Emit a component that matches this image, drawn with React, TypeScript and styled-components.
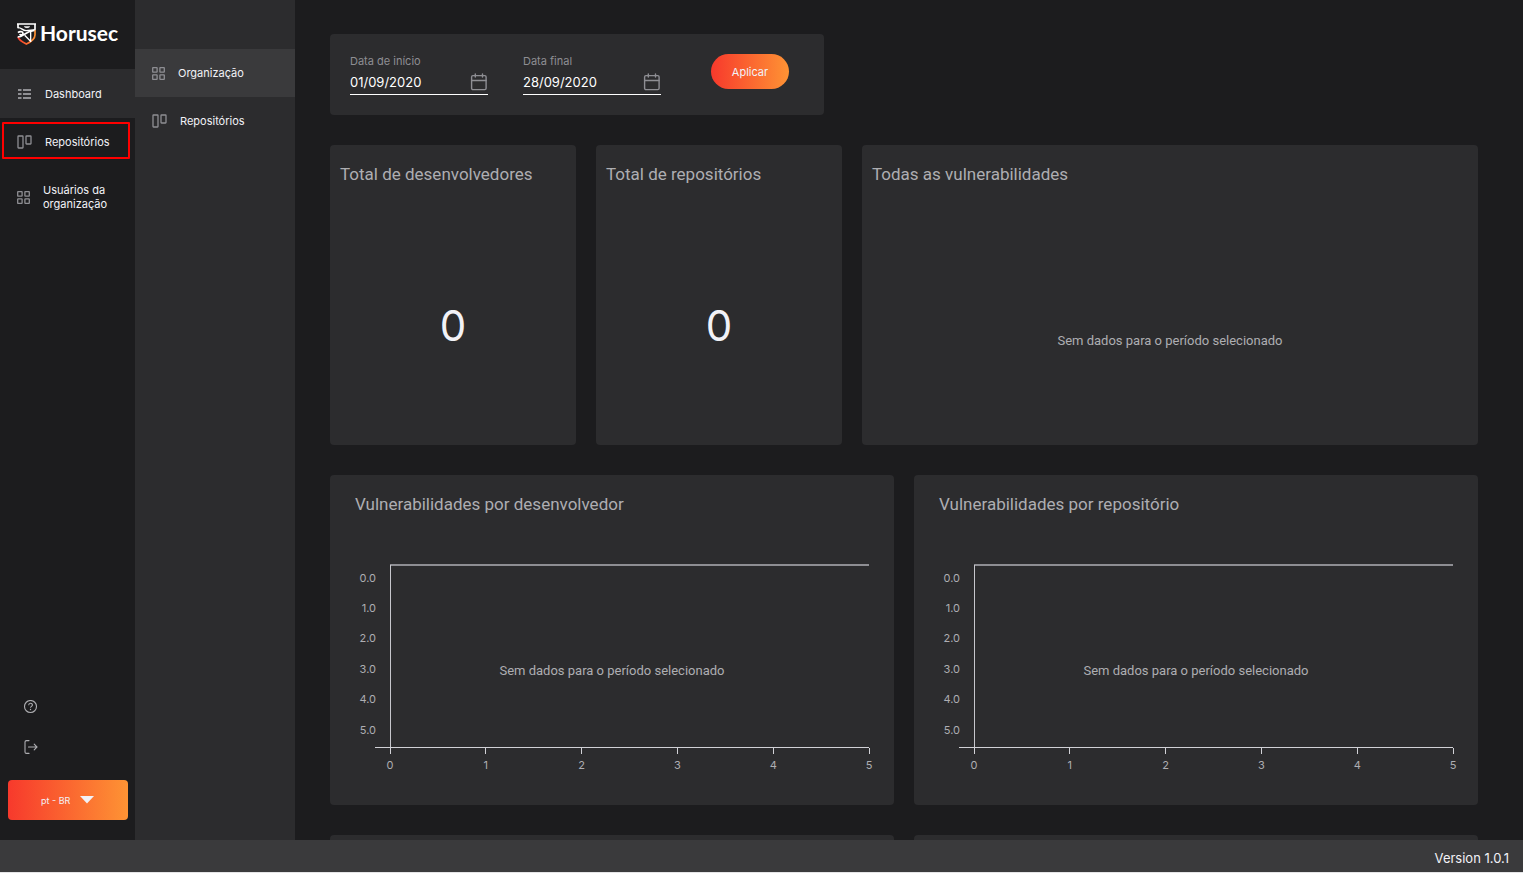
import React from 'react';
import styled, { createGlobalStyle } from 'styled-components';

const GlobalStyle = createGlobalStyle`
  *, *::before, *::after { box-sizing: border-box; }
  body {
    margin: 0;
    background: #1c1c1e;
    color: #f2f2f7;
    font-family: Inter, "Liberation Sans", sans-serif;
    font-size: 11px;
  }
  h1, h2, p, ul { margin: 0; padding: 0; font-weight: 400; }
  ul { list-style: none; }
  button, input, select { font-family: inherit; }
`;

const Shell = styled.div`
  display: flex;
  flex-direction: column;
  height: 100vh;
  overflow: hidden;
  border-bottom: 1px solid #e5e5e7;
`;

const Body = styled.div`
  display: flex;
  flex: 1;
  min-height: 0;
`;

const Sidebar = styled.aside`
  display: flex;
  flex-direction: column;
  justify-content: space-between;
  flex: 0 0 135px;
  background: #1c1c1e;
`;

const Brand = styled.a`
  display: flex;
  align-items: center;
  gap: 4px;
  height: 69px;
  padding: 0 0 4px 17px;
  color: #fff;
  font-family: Lato, sans-serif;
  font-size: 21px;
  font-weight: 700;
  text-decoration: none;

  svg { margin-top: 2px; }
`;

const SubMenu = styled.nav`
  flex: 0 0 160px;
  padding-top: 49px;
  background: #2c2c2e;
`;

const NavItem = styled.li`
  position: relative;
`;

const NavLink = styled.a<{ $active?: boolean; $height?: number; $tone?: string }>`
  display: flex;
  align-items: center;
  gap: 13px;
  height: ${(p) => p.$height || 48}px;
  padding: 0 16px 0 17px;
  background: ${(p) => (p.$active ? p.$tone || '#2c2c2e' : 'transparent')};
  color: #f2f2f7;
  font-size: 11px;
  line-height: 14px;
  text-decoration: none;

  svg { flex: none; }
`;

const Highlight = styled.span`
  position: absolute;
  inset: 4px 5px 7px 2px;
  border: 2px solid #ff0000;
  border-radius: 1px;
  pointer-events: none;
`;

const SidebarFooter = styled.div`
  display: flex;
  flex-direction: column;
  padding: 0 7px 20px 8px;
`;

const IconButton = styled.button`
  display: flex;
  align-items: center;
  width: 40px;
  height: 40px;
  padding: 0 0 0 15px;
  border: 0;
  background: none;
  color: #aeaeb2;
`;

const LanguageBox = styled.label`
  position: relative;
  display: block;
  height: 40px;
  margin-top: 13px;
  border-radius: 4px;
  background: linear-gradient(90deg, #f7392c, #fe9334);

  svg {
    position: absolute;
    top: 16px;
    left: 72px;
    pointer-events: none;
  }
`;

const LanguageSelect = styled.select`
  width: 100%;
  height: 100%;
  padding: 0 0 0 33px;
  border: 0;
  appearance: none;
  background: none;
  color: #f2f2f7;
  font-size: 9px;

  option { color: #1c1c1e; }
`;

const Main = styled.main`
  display: flex;
  flex: 1;
  flex-direction: column;
  gap: 30px;
  min-width: 0;
  padding: 34px 45px 0 35px;
  overflow: hidden;
`;

const Card = styled.section`
  flex: none;
  border-radius: 4px;
  background: #2c2c2e;
`;

const FilterForm = styled.form`
  display: flex;
  flex: none;
  align-self: flex-start;
  align-items: flex-start;
  padding: 20px 35px 20px 20px;
  border-radius: 4px;
  background: #2c2c2e;
`;

const Field = styled.div`
  width: 138px;
  margin-right: 35px;
`;

const FieldLabel = styled.label`
  display: block;
  color: #8e8e93;
  font-size: 11px;
  line-height: 15px;
`;

const FieldControl = styled.div`
  display: flex;
  align-items: center;
  height: 26px;
  border-bottom: 1px solid #fff;
`;

const DateInput = styled.input`
  flex: 1;
  min-width: 0;
  padding: 0;
  border: 0;
  outline: 0;
  background: none;
  color: #fff;
  font-size: 13px;
  line-height: 20px;
`;

const CalendarButton = styled.button`
  display: flex;
  padding: 0;
  border: 0;
  background: none;
`;

const ApplyButton = styled.button`
  width: 78px;
  height: 35px;
  margin-left: 15px;
  border: 0;
  border-radius: 18px;
  background: linear-gradient(90deg, #f7392c, #fe9334);
  color: #f2f2f7;
  font-size: 11px;
`;

const Row = styled.div`
  display: flex;
  flex: none;
  gap: 20px;
`;

const Tile = styled(Card)<{ $wide?: boolean }>`
  display: flex;
  flex-direction: column;
  flex: ${(p) => (p.$wide ? '1 1 0' : '0 0 246px')};
  height: 300px;
  padding: 18px 10px 0;
`;

const ChartCard = styled(Card)`
  flex: 1 1 0;
  min-width: 0;
  height: 330px;
  padding: 18px 25px 0;
`;

const Title = styled.h2`
  color: #aeaeb2;
  font-family: Roboto, "Liberation Sans", sans-serif;
  font-size: 17px;
  line-height: 22px;
`;

const Total = styled.p`
  display: flex;
  flex: 1;
  align-items: center;
  justify-content: center;
  padding-top: 20px;
  font-size: 42px;
`;

const Empty = styled.p`
  color: #aeaeb2;
  font-family: Roboto, "Liberation Sans", sans-serif;
  font-size: 13px;
  line-height: 18px;
  text-align: center;
`;

const TileEmpty = styled(Empty)`
  margin-top: 147px;
`;

const Plot = styled.div`
  position: relative;
  height: 183px;
  margin: 49px 0 0 35px;

  svg {
    display: block;
    overflow: visible;
  }
  text {
    fill: #aeaeb2;
    font-size: 11px;
  }
`;

const PlotEmpty = styled(Empty)`
  position: absolute;
  top: 98px;
  right: 35px;
  left: 0;
`;

const Footer = styled.footer`
  flex: none;
  height: 32px;
  padding: 2px 14px 0 0;
  background: #3a3a3c;
  font-size: 13px;
  line-height: 32px;
  text-align: right;
`;

const Logo = () => (
  <svg width="19" height="22" viewBox="0 0 57 66" fill="none" aria-hidden="true">
    <defs>
      <linearGradient id="shield" x1="0" y1="0" x2="1" y2="0">
        <stop offset="0" stopColor="#f7392c" />
        <stop offset="1" stopColor="#fe9334" />
      </linearGradient>
    </defs>
    <path d="M3 42c2 9 13 15 25 21 13-6 26-13 26-28V20" stroke="url(#shield)" strokeWidth="5" />
    <path d="M0 3h57M3 1v15M54 1v19" stroke="#fff" strokeWidth="5" />
    <path d="M22 11c4 4 12 4 16 0z" fill="#fff" stroke="#fff" strokeWidth="2" />
    <path d="M3 14c12 0 12 8 24 9 10 0 15-2 28-3" stroke="#fff" strokeWidth="4" />
    <path d="M3 29c5-5 15-4 15 2 0 6-8 6-10 2M2 42c18 0 20-16 50-20" stroke="#fff" strokeWidth="5" />
    <path d="M41 25v32M23 37l17 17" stroke="#fff" strokeWidth="4" />
  </svg>
);

const ListIcon = () => (
  <svg width="15" height="10" viewBox="0 0 15 10" fill="none" stroke="#f2f2f7" aria-hidden="true">
    <path d="M1 1h3.500M6 1h8M1 5h3.500M6 5h8M1 9h3.500M6 9h8" strokeWidth="1.200" />
  </svg>
);

const BoardIcon = () => (
  <svg width="15" height="14" viewBox="0 0 15 14" fill="none" stroke="#8e8e93" strokeWidth="1.300" aria-hidden="true">
    <rect x="1" y="1" width="5" height="12" rx="0.5" />
    <rect x="9" y="1" width="5" height="8" rx="0.5" />
  </svg>
);

const GridIcon = () => (
  <svg width="13" height="13" viewBox="0 0 13 13" fill="none" stroke="#8e8e93" strokeWidth="1.300" aria-hidden="true">
    <rect x="0.7" y="0.7" width="4.4" height="4.4" rx="0.4" />
    <rect x="7.9" y="0.7" width="4.4" height="4.4" rx="0.4" />
    <rect x="0.7" y="7.9" width="4.4" height="4.4" rx="0.4" />
    <rect x="7.9" y="7.9" width="4.4" height="4.4" rx="0.4" />
  </svg>
);

const HelpIcon = () => (
  <svg width="15" height="14" viewBox="0 0 15 14" fill="none" stroke="currentColor" aria-hidden="true">
    <circle cx="7.5" cy="6.5" r="6" strokeWidth="1.1" />
    <path d="M5.700 5.200c0-2.500 3.700-2.500 3.700-.2 0 1.400-1.900 1.400-1.900 2.800" strokeWidth="1.1" />
    <circle cx="7.500" cy="9.500" r="0.700" fill="currentColor" stroke="none" />
  </svg>
);

const LogoutIcon = () => (
  <svg width="15" height="14" viewBox="0 0 15 14" fill="none" stroke="currentColor" strokeWidth="1.1" strokeLinecap="round" aria-hidden="true">
    <path d="M6 .6H3.500Q2 .6 2 2v10q0 1.400 1.500 1.400H6M5.500 7H14M11.200 4.200L14 7l-2.800 2.800" />
  </svg>
);

const CalendarIcon = () => (
  <svg width="18" height="18" viewBox="0 0 18 18" fill="none" stroke="#8e8e93" strokeWidth="1.400" strokeLinecap="round" aria-hidden="true">
    <rect x="1.600" y="2.600" width="14.500" height="14" rx="1.300" />
    <path d="M1.600 7.500h14.500M5.300 1v3M12.500 1v3" />
  </svg>
);

const DateField = ({ id, label, value }: { id: string; label: string; value: string }) => (
  <Field>
    <FieldLabel htmlFor={id}>{label}</FieldLabel>
    <FieldControl>
      <DateInput id={id} defaultValue={value} />
      <CalendarButton type="button" aria-label={label}>
        <CalendarIcon />
      </CalendarButton>
    </FieldControl>
  </Field>
);

const yTicks = [
  { label: '0.0', y: 18 },
  { label: '1.0', y: 48 },
  { label: '2.0', y: 78 },
  { label: '3.0', y: 109 },
  { label: '4.0', y: 139 },
  { label: '5.0', y: 170 },
];
const xTicks = [0, 1, 2, 3, 4, 5];

const EmptyChart = ({ title }: { title: string }) => (
  <ChartCard>
    <Title>{title}</Title>
    <Plot>
      <svg width="100%" height="183" shapeRendering="crispEdges">
        <line x1="0" x2="100%" y1="1" y2="1" stroke="#8e8e93" strokeWidth="2" />
        <line x1="0.5" x2="0.5" y1="1" y2="190" stroke="#c7c7cc" />
        <line x1="-15" x2="100%" y1="183.500" y2="183.500" stroke="#d1d1d6" />
        {xTicks.map((n) => (
          <React.Fragment key={n}>
            <line x1={`${n * 20}%`} x2={`${n * 20}%`} y1="184" y2="190" stroke="#d1d1d6" />
            <text x={`${n * 20}%`} y="205" textAnchor="middle">{n}</text>
          </React.Fragment>
        ))}
        {yTicks.map((t) => (
          <text key={t.label} x="-14" y={t.y} textAnchor="end">{t.label}</text>
        ))}
      </svg>
      <PlotEmpty>Sem dados para o período selecionado</PlotEmpty>
    </Plot>
  </ChartCard>
);

export default function App() {
  return (
    <>
      <GlobalStyle />
      <Shell>
        <Body>
          <Sidebar>
            <nav>
              <Brand href="#">
                <Logo />
                Horusec
              </Brand>
              <ul>
                <NavItem><NavLink href="#" $active $height={49}><ListIcon />Dashboard</NavLink></NavItem>
                <NavItem><NavLink href="#"><BoardIcon />Repositórios</NavLink><Highlight /></NavItem>
                <NavItem><NavLink href="#" $height={62}><GridIcon />Usuários da organização</NavLink></NavItem>
              </ul>
            </nav>
            <SidebarFooter>
              <IconButton type="button" aria-label="Ajuda"><HelpIcon /></IconButton>
              <IconButton type="button" aria-label="Sair"><LogoutIcon /></IconButton>
              <LanguageBox>
                <LanguageSelect aria-label="Idioma" defaultValue="pt">
                  <option value="pt">pt - BR</option>
                </LanguageSelect>
                <svg width="14" height="8" viewBox="0 0 14 8" aria-hidden="true">
                  <path d="M0 0h14L7 7.500z" fill="#f2f2f7" />
                </svg>
              </LanguageBox>
            </SidebarFooter>
          </Sidebar>
          <SubMenu>
            <ul>
              <NavItem><NavLink href="#" $active $tone="#3a3a3c"><GridIcon />Organização</NavLink></NavItem>
              <NavItem><NavLink href="#"><BoardIcon />Repositórios</NavLink></NavItem>
            </ul>
          </SubMenu>
          <Main>
            <FilterForm>
              <DateField id="start" label="Data de início" value="01/09/2020" />
              <DateField id="end" label="Data final" value="28/09/2020" />
              <ApplyButton type="button">Aplicar</ApplyButton>
            </FilterForm>
            <Row>
              <Tile><Title>Total de desenvolvedores</Title><Total>0</Total></Tile>
              <Tile><Title>Total de repositórios</Title><Total>0</Total></Tile>
              <Tile $wide>
                <Title>Todas as vulnerabilidades</Title>
                <TileEmpty>Sem dados para o período selecionado</TileEmpty>
              </Tile>
            </Row>
            <Row>
              <EmptyChart title="Vulnerabilidades por desenvolvedor" />
              <EmptyChart title="Vulnerabilidades por repositório" />
            </Row>
            <Row>
              <ChartCard />
              <ChartCard />
            </Row>
          </Main>
        </Body>
        <Footer>Version 1.0.1</Footer>
      </Shell>
    </>
  );
}
